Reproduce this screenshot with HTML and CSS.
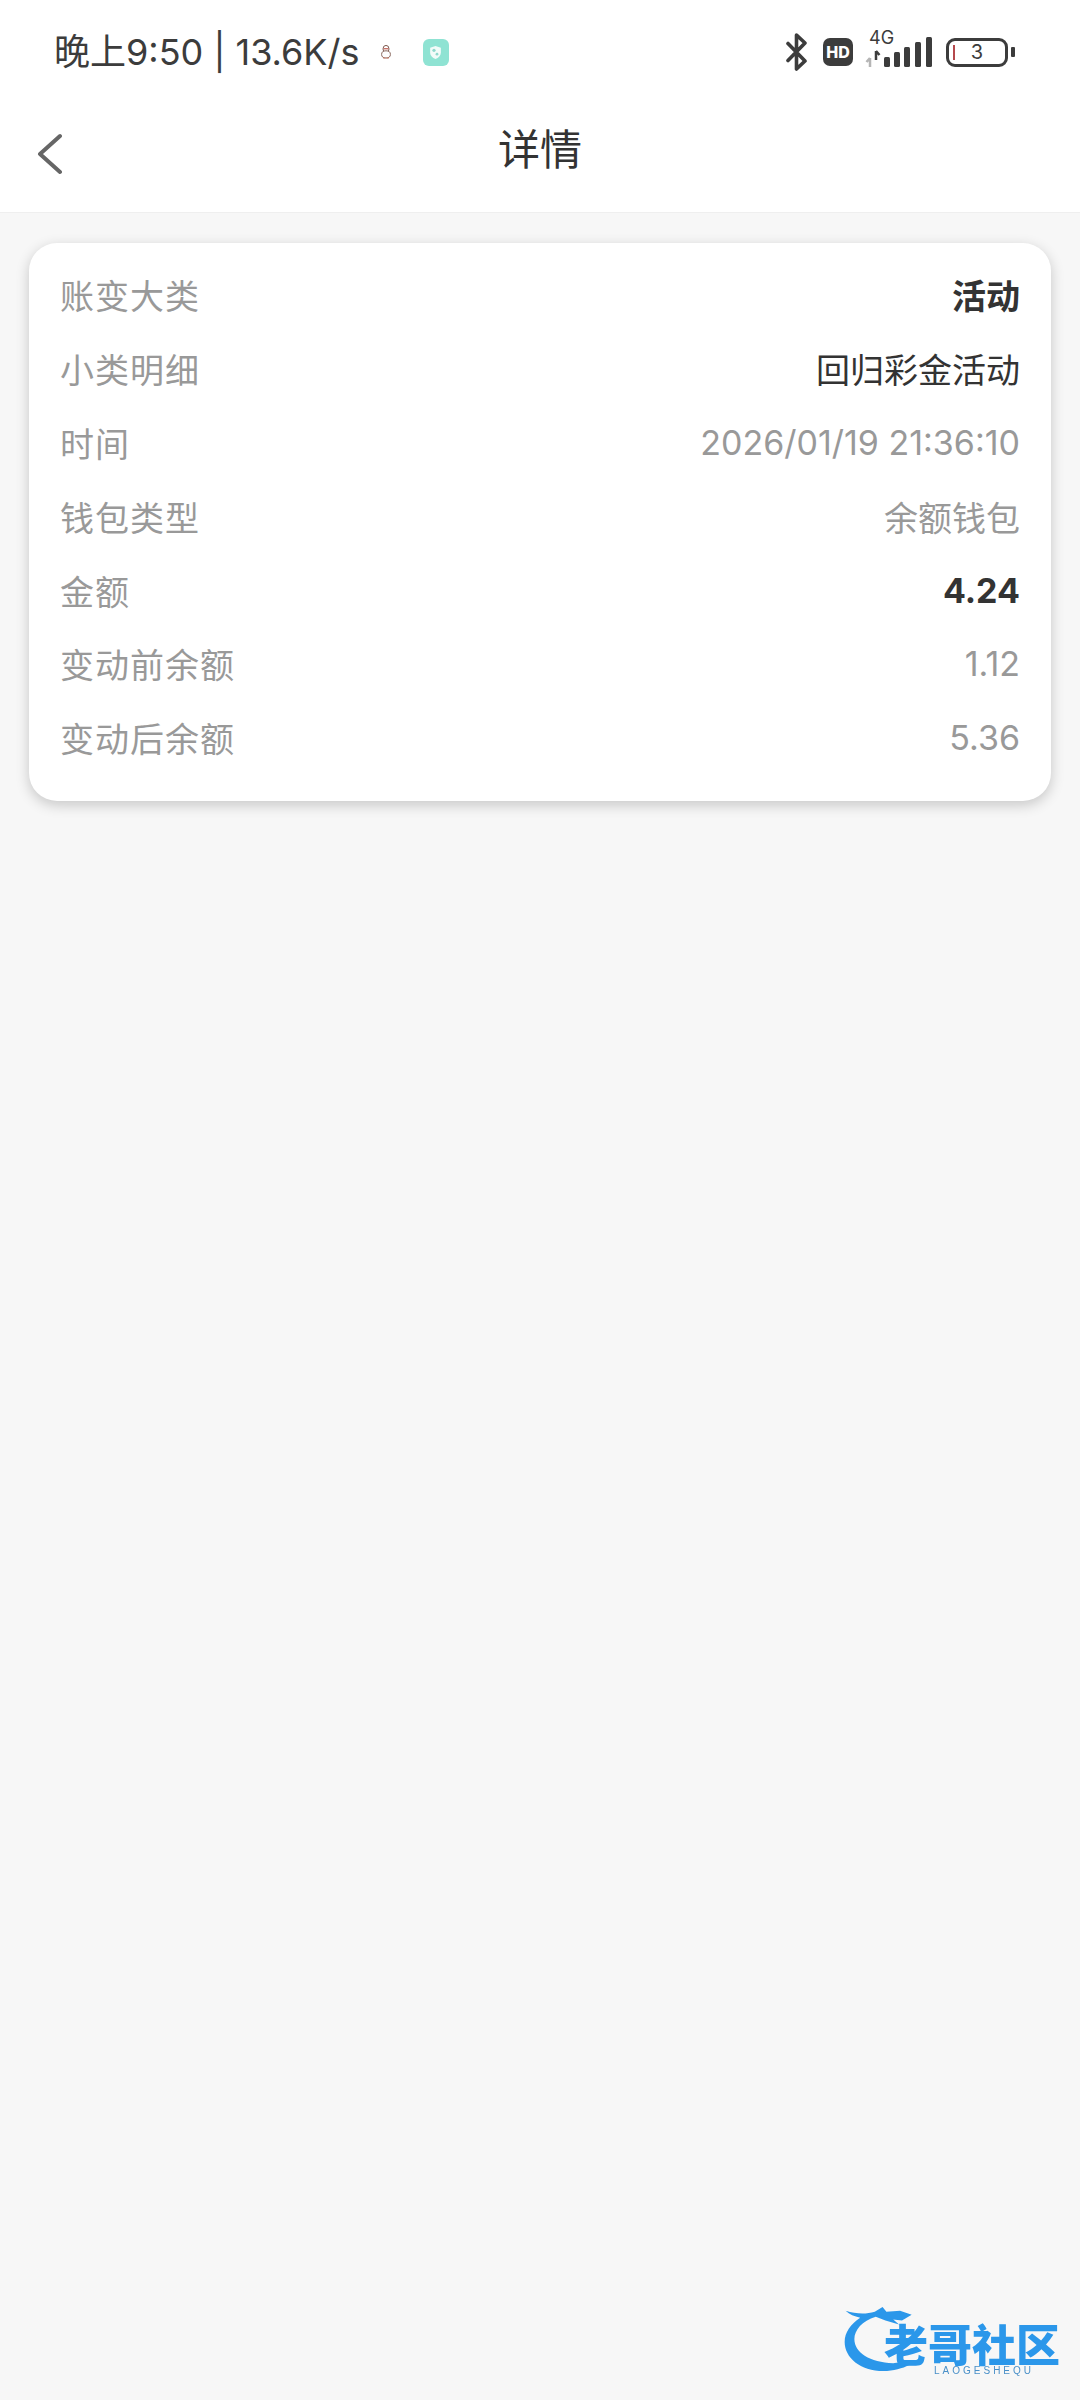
FILE: index.html
```html
<!DOCTYPE html>
<html lang="zh-CN">
  <head>
    <meta charset="utf-8" />
    <meta name="viewport" content="width=device-width,initial-scale=1.0" />
    <title>详情</title>
    <link rel="stylesheet" href="styles.css">
  </head>
  <body>
    <div id="app">
      <!-- status bar -->
      <div class="status">
        <div class="status-left">
          <span class="status-text">晚上9:50 | 13.6K/s</span>
          <svg class="icon-qq" viewBox="0 0 12 14">
            <ellipse cx="6" cy="4" rx="3" ry="3.6" fill="#fff" stroke="#7d5a50" stroke-width="1" />
            <rect x="3.6" y="3" width="4.8" height="1.4" fill="#c9736a" />
            <ellipse cx="6" cy="9.4" rx="4.4" ry="3.6" fill="#fdfdfd" stroke="#8a6a60" stroke-width="1" />
            <path d="M3 13h2.4M6.6 13H9" stroke="#d0806a" stroke-width="1.2" />
          </svg>
          <span class="icon-shield">
            <svg viewBox="0 0 12 14">
              <path d="M6 1l5 1.6v4.6c0 2.8-2.2 4.8-5 5.8-2.8-1-5-3-5-5.8V2.600z" fill="#f2fbf9" />
              <circle cx="4.600" cy="5" r="1.500" fill="#8fd8cc" />
              <circle cx="7.400" cy="8.600" r="1.300" fill="#8fd8cc" />
            </svg>
          </span>
        </div>
        <div class="status-right">
          <svg class="icon-bt" viewBox="0 0 24 38">
            <path d="M3 10.500l17 17.500-8.500 8V2l8.500 8L3 27.500" fill="none" stroke="#3c3c3c" stroke-width="3.600" stroke-linecap="round" stroke-linejoin="round" />
          </svg>
          <span class="badge-hd">HD</span>
          <div class="signal">
            <span class="signal-type">4G</span>
            <svg class="signal-bars" viewBox="0 0 67 30">
              <path d="M5 30v-9M1.500 25l3.500-4" stroke="#b5b5b5" stroke-width="2.500" fill="none" />
              <path d="M11 14v9M11 14l3.500 4" stroke="#3c3c3c" stroke-width="2.500" fill="none" />
              <rect x="19" y="20" width="6" height="10" rx="1.500" fill="#3c3c3c" />
              <rect x="29" y="15" width="6" height="15" rx="1.500" fill="#3c3c3c" />
              <rect x="39" y="10" width="6" height="20" rx="1.500" fill="#3c3c3c" />
              <rect x="50" y="5" width="6" height="25" rx="1.500" fill="#3c3c3c" />
              <rect x="61" y="0" width="6" height="30" rx="1.500" fill="#3c3c3c" />
            </svg>
          </div>
          <div class="battery">
            <div class="battery-body">
              <i class="battery-level"></i>
              <span class="battery-num">3</span>
            </div>
            <i class="battery-tip"></i>
          </div>
        </div>
      </div>

      <!-- nav -->
      <div class="nav">
        <svg class="nav-back" viewBox="0 0 26 42">
          <path d="M24 3L4 21l20 18" fill="none" stroke="#666" stroke-width="4" stroke-linecap="round" stroke-linejoin="round" />
        </svg>
        <div class="nav-title">详情</div>
      </div>

      <!-- detail card -->
      <div class="content">
        <div class="card">
          <div class="row"><span class="label">账变大类</span><span class="val val-bold">活动</span></div>
          <div class="row"><span class="label">小类明细</span><span class="val val-dark">回归彩金活动</span></div>
          <div class="row"><span class="label">时间</span><span class="val">2026/01/19 21:36:10</span></div>
          <div class="row"><span class="label">钱包类型</span><span class="val">余额钱包</span></div>
          <div class="row"><span class="label">金额</span><span class="val val-bold">4.24</span></div>
          <div class="row"><span class="label">变动前余额</span><span class="val">1.12</span></div>
          <div class="row"><span class="label">变动后余额</span><span class="val">5.36</span></div>
        </div>
      </div>
    </div>

    <!-- watermark -->
    <div class="mark">
      <svg class="mark-dragon" viewBox="0 0 120 70">
        <path d="M3 6c10 3 20 4 30 1l8-5 4 5 14-1 12 4-10 6-9-1 6 5-14-4-10-4C20 16 12 26 12 35c0 14 16 24 40 25l20-3-4 5c-6 3-16 6-26 6C18 68 2 54 2 38 2 28 8 20 18 13 12 12 7 10 3 6z" fill="#2b97ea" />
      </svg>
      <div class="mark-text">
        <div class="mark-title">老哥社区</div>
        <div class="mark-sub">LAOGESHEQU</div>
      </div>
    </div>
  </body>
</html>
```

FILE: styles.css
```css
html,
body {
  margin: 0;
  padding: 0;
  height: 100%;
}
body {
  position: relative;
  background: #f7f7f7;
  font-family: "Inter", "Noto Sans CJK SC", sans-serif;
  overflow: hidden;
}
#app {
  display: flex;
  flex-direction: column;
  height: 100%;
}

/* status bar */
.status {
  display: flex;
  align-items: center;
  justify-content: space-between;
  height: 104px;
  padding: 0 65px 0 54px;
  box-sizing: border-box;
  background: #fff;
  color: #3c3c3c;
}
.status-left {
  display: flex;
  align-items: center;
}
.status-text {
  font-size: 36px;
  line-height: 44px;
  white-space: nowrap;
}
.icon-qq {
  width: 12px;
  height: 14px;
  margin-left: 20px;
}
.icon-shield {
  display: flex;
  align-items: center;
  justify-content: center;
  width: 26px;
  height: 27px;
  margin-left: 31px;
  border-radius: 6px;
  background: #8fe3d3;
}
.icon-shield svg {
  width: 13px;
  height: 15px;
}
.status-right {
  display: flex;
  align-items: center;
}
.icon-bt {
  width: 24px;
  height: 38px;
}
.badge-hd {
  width: 30px;
  height: 28px;
  margin-left: 14px;
  border-radius: 7px;
  background: #3c3c3c;
  color: #fff;
  font-size: 16px;
  font-weight: 800;
  line-height: 28px;
  text-align: center;
}
.signal {
  position: relative;
  width: 67px;
  height: 30px;
  margin-left: 12px;
}
.signal-type {
  position: absolute;
  left: 4px;
  top: -9px;
  font-size: 18px;
  line-height: 20px;
}
.signal-bars {
  display: block;
  width: 67px;
  height: 30px;
}
.battery {
  display: flex;
  align-items: center;
  margin-left: 14px;
}
.battery-body {
  position: relative;
  width: 62px;
  height: 29px;
  box-sizing: border-box;
  border: 3px solid #3c3c3c;
  border-radius: 9px;
  font-size: 20px;
  line-height: 23px;
  text-align: center;
}
.battery-level {
  position: absolute;
  left: 4px;
  top: 4px;
  width: 2px;
  height: 15px;
  background: #b5484c;
}
.battery-tip {
  width: 4px;
  height: 10px;
  margin-left: 3px;
  border-radius: 1px;
  background: #3c3c3c;
}

/* nav */
.nav {
  position: relative;
  display: flex;
  align-items: center;
  justify-content: center;
  height: 109px;
  box-sizing: border-box;
  padding-bottom: 23px;
  background: #fff;
  border-bottom: 1px solid #efefef;
}
.nav-back {
  position: absolute;
  left: 36px;
  top: 29px;
  width: 26px;
  height: 42px;
}
.nav-title {
  font-family: "Noto Sans CJK SC", sans-serif;
  font-size: 42px;
  line-height: 56px;
  color: #333;
}

/* card */
.content {
  padding: 30px 29px;
}
.card {
  padding: 15px 31px 26px;
  border-radius: 28px;
  background: #fff;
  box-shadow: 0 4px 14px rgba(0, 0, 0, 0.2);
}
.row {
  display: flex;
  align-items: center;
  justify-content: space-between;
  height: 73.800px;
}
.label {
  color: #999;
  font-family: "Noto Sans CJK SC", sans-serif;
  font-size: 34px;
  letter-spacing: 1px;
}
.val {
  color: #999;
  font-size: 34px;
}
.val-dark {
  color: #333;
}
.val-bold {
  color: #333;
  font-weight: 700;
}

/* watermark */
.mark {
  position: absolute;
  left: 842px;
  top: 2305px;
  width: 222px;
  height: 68px;
  filter: blur(0.6px);
}
.mark-dragon {
  position: absolute;
  left: 0;
  top: 0;
  width: 118px;
  height: 68px;
}
.mark-text {
  position: absolute;
  left: 42px;
  top: 16px;
  width: 180px;
}
.mark-title {
  font-family: "Noto Sans CJK SC", sans-serif;
  font-size: 44px;
  font-weight: 900;
  line-height: 44px;
  color: #2b97ea;
  white-space: nowrap;
}
.mark-sub {
  margin: 0 0 0 50px;
  font-family: "Liberation Sans", sans-serif;
  font-size: 10px;
  letter-spacing: 3px;
  line-height: 12px;
  color: #4a90c8;
}
```
